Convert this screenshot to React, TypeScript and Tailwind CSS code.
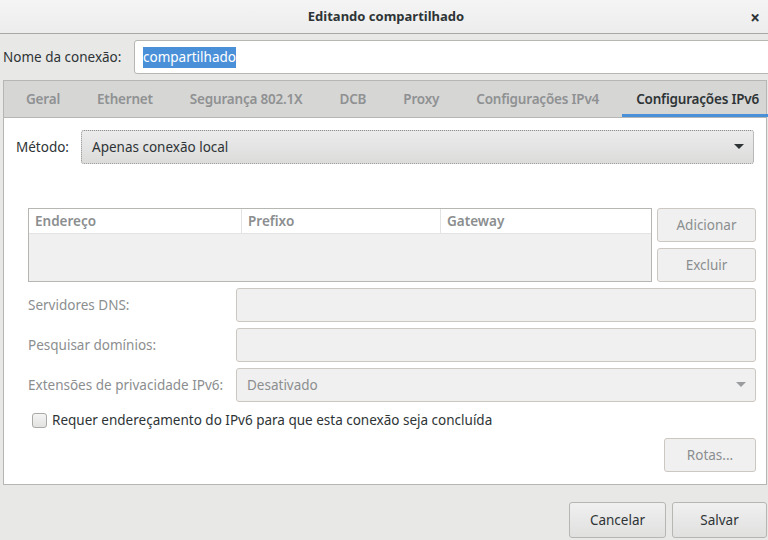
import React from "react";

const tabs = [
  "Geral",
  "Ethernet",
  "Segurança 802.1X",
  "DCB",
  "Proxy",
  "Configurações IPv4",
  "Configurações IPv6",
];

function Arrow({ muted }: { muted?: boolean }) {
  return (
    <svg width="10" height="6" viewBox="0 0 10 6" className="shrink-0">
      <path d="M0 0 L10 0 L5 5 Z" fill={muted ? "#9a9c9d" : "#2e3436"} />
    </svg>
  );
}

function DisabledEntry() {
  return <div className="flex-1 h-[34px] rounded-[3px] border border-[#cdc7c2] bg-[#f0f0f0]" />;
}

function FormRow({ label, children }: { label: string; children: React.ReactNode }) {
  return (
    <div className="flex items-center">
      <span className="w-[208px] text-[#8b8e8f]">{label}</span>
      {children}
    </div>
  );
}

function DisabledButton({ label, className }: { label: string; className: string }) {
  return (
    <div
      className={`h-[34px] flex items-center justify-center rounded-[3px] border border-[#cdc7c2] bg-[#f0f0f0] text-[#8b8e8f] ${className}`}
    >
      {label}
    </div>
  );
}

export default function App() {
  return (
    <div
      className="w-[768px] h-[540px] overflow-hidden bg-[#e8e8e7] flex flex-col text-[13.5px] text-[#2e3436]"
      style={{ fontFamily: '"Noto Sans", "Open Sans", sans-serif' }}
    >
      {/* Title bar */}
      <div className="h-[34px] shrink-0 flex items-center relative bg-gradient-to-b from-[#f4f4f4] to-[#ededed] border-b border-[#a8a8a5]">
        <div className="flex-1 text-center font-bold text-[13px] pl-[4px]">Editando compartilhado</div>
        <span className="absolute right-[8px] top-[5px] text-[17px] font-bold">×</span>
      </div>

      {/* Connection name */}
      <div className="flex items-center mt-[6px] pl-[3px] h-[34px]">
        <span className="w-[131px] shrink-0">Nome da conexão:</span>
        <div className="flex-1 h-[34px] -mr-[4px] rounded-l-[3px] border border-[#b6b6b3] bg-white flex items-center pl-[8px]">
          <span className="bg-[#4a90d9] text-white leading-[21px]">compartilhado</span>
        </div>
      </div>

      {/* Notebook */}
      <div className="mt-[6px] ml-[3px] mr-[1px] border border-[#b6b6b3] flex flex-col h-[405px]">
        <div className="h-[37px] shrink-0 flex gap-[9px] px-2 bg-[#d6d6d5] border-b border-[#b6b6b3]">
          {tabs.map((t, i) => (
            <div
              key={t}
              className={`px-[14px] flex items-center font-semibold whitespace-nowrap tracking-[-0.2px] ${
                i === tabs.length - 1
                  ? "text-[#2e3436] border-b-[3px] border-[#4a90d9] pt-[3px]"
                  : "text-[#8f9192]"
              }`}
            >
              {t}
            </div>
          ))}
        </div>

        <div className="flex-1 bg-white pt-[12px] pl-[12px] pr-[12px] flex flex-col">
          <div className="flex items-center h-[34px]">
            <span className="w-[65px] shrink-0">Método:</span>
            <div className="flex-1 h-[34px] rounded-[3px] border border-dotted border-[#8f8f8c] bg-gradient-to-b from-[#ececec] to-[#dcdcdb] flex items-center justify-between pl-[10px] pr-[9px]">
              <span>Apenas conexão local</span>
              <Arrow />
            </div>
          </div>

          <div className="ml-[12px] -mr-[2px] mt-[44px] flex flex-col gap-[6px]">
            <div className="flex gap-[5px]">
              <div className="w-[624px] h-[74px] border border-[#b6b6b3] flex flex-col">
                <div className="h-[25px] flex bg-white border-b border-[#e3e3e3] text-[#8b8e8f] font-semibold">
                  <div className="w-[213px] pl-[6px] flex items-center border-r border-[#e3e3e3]">Endereço</div>
                  <div className="w-[199px] pl-[6px] flex items-center border-r border-[#e3e3e3]">Prefixo</div>
                  <div className="flex-1 pl-[6px] flex items-center">Gateway</div>
                </div>
                <div className="flex-1 bg-[#f0f0f0]" />
              </div>
              <div className="flex-1 flex flex-col gap-[6px]">
                <DisabledButton label="Adicionar" className="w-full" />
                <DisabledButton label="Excluir" className="w-full" />
              </div>
            </div>

            <FormRow label="Servidores DNS:">
              <DisabledEntry />
            </FormRow>
            <FormRow label="Pesquisar domínios:">
              <DisabledEntry />
            </FormRow>
            <FormRow label="Extensões de privacidade IPv6:">
              <div className="flex-1 h-[34px] rounded-[3px] border border-[#cdc7c2] bg-[#f0f0f0] flex items-center justify-between pl-[10px] pr-[9px] text-[#8b8e8f]">
                <span>Desativado</span>
                <Arrow muted />
              </div>
            </FormRow>

            <div className="flex items-center gap-[5px] pl-[4px] h-[20px] mt-[2px]">
              <div className="w-[15px] h-[15px] rounded-[3px] border border-[#a9a9a6] bg-gradient-to-b from-[#f4f4f4] to-[#e2e2e1]" />
              <span>Requer endereçamento do IPv6 para que esta conexão seja concluída</span>
            </div>

            <div className="flex justify-end mt-[2px]">
              <DisabledButton label="Rotas..." className="w-[92px]" />
            </div>
          </div>
        </div>
      </div>

      {/* Footer */}
      <div className="flex justify-end gap-[6px] mt-[17px] pr-[1px]">
        <div className="w-[97px] h-[36px] rounded-[3px] border border-[#b6b6b3] bg-gradient-to-b from-[#f0f0f0] to-[#e0e0df] flex items-center justify-center">
          Cancelar
        </div>
        <div className="w-[95px] h-[36px] rounded-[3px] border border-[#b6b6b3] bg-gradient-to-b from-[#f0f0f0] to-[#e0e0df] flex items-center justify-center">
          Salvar
        </div>
      </div>
    </div>
  );
}
